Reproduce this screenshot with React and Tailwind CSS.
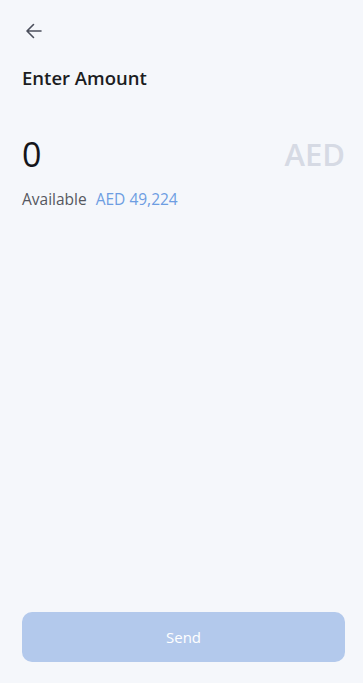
import React from 'react'

const App = () => {
    return (
        <main
            className="w-full h-[683px] bg-[#f5f7fb] flex flex-col pl-[22px] pr-[18px]"
            style={{ fontFamily: '"Open Sans", "Noto Sans", sans-serif' }}
        >
            {/* Back arrow */}
            <div className="pt-[21px] h-[42px]">
                <svg width="20" height="20" viewBox="0 0 20 20" fill="none" className="ml-[2px]">
                    <path d="M17 10H3.5M9.5 3.5L3 10l6.5 6.5" stroke="#4b4f5c" strokeWidth="1.6" strokeLinecap="round" strokeLinejoin="round" />
                </svg>
            </div>

            {/* Title */}
            <h1 className="mt-[24px] text-[18.5px] leading-[24px] font-semibold text-[#1c1d22]">
                Enter Amount
            </h1>

            {/* Amount */}
            <div className="mt-[43px] flex items-center justify-between">
                <span className="text-[34px] leading-[42px] text-[#14151a]">0</span>
                <span className="text-[31px] leading-[42px] font-semibold text-[#d6dae4]">AED</span>
            </div>

            {/* Available */}
            <div className="mt-[13px] flex items-center gap-[9px] text-[15.5px] leading-[22px]">
                <span className="text-[#55575f]">Available</span>
                <span className="text-[#6d9de2]">AED 49,224</span>
            </div>

            <div className="flex-1" />

            {/* Send button */}
            <button className="mb-[21px] h-[50px] w-full rounded-[10px] bg-[#b3c9ec] text-white text-[15px]">
                Send
            </button>
        </main>
    )
}

export default App
